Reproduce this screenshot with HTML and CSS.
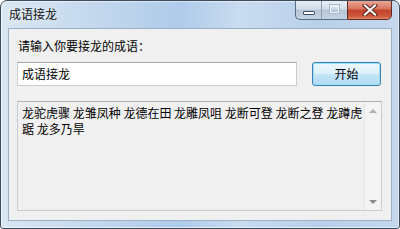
FILE: index.html
```html
<!DOCTYPE html>
<html lang="zh-CN">
<head>
<meta charset="utf-8">
<title>成语接龙</title>
<link rel="stylesheet" href="styles.css">
</head>
<body>
<div class="win">
  <div class="titlebar">
    <span class="title">成语接龙</span>
    <div class="caption">
      <div class="cbtn min"><span class="min-ico"></span></div>
      <div class="cbtn max"><span class="max-ico"></span></div>
      <div class="cbtn close">
        <svg width="16" height="12" viewBox="0 0 16 12">
          <path d="M3 1.5 L13 10.5 M13 1.5 L3 10.5" stroke="#5a2218" stroke-width="4.2" stroke-linecap="square" fill="none"/>
          <path d="M3 1.5 L13 10.5 M13 1.5 L3 10.5" stroke="#ffffff" stroke-width="2.2" stroke-linecap="square" fill="none"/>
        </svg>
      </div>
    </div>
  </div>
  <div class="client">
    <div class="label">请输入你要接龙的成语：</div>
    <div class="row">
      <div class="input">成语接龙</div>
      <div class="button">开始</div>
    </div>
    <div class="memo">
      <div class="memo-text">龙驼虎骤 龙雏凤种 龙德在田 龙雕凤咀 龙断可登 龙断之登 龙蹲虎踞 龙多乃旱</div>
      <div class="vscroll">
        <div class="arrow up"></div>
        <div class="arrow down"></div>
      </div>
    </div>
  </div>
</div>
</body>
</html>
```
FILE: styles.css
```css
html, body {
  margin: 0;
  padding: 0;
  background: #ffffff;
}
body {
  font-family: "Noto Sans CJK SC", "Noto Sans", sans-serif;
  font-size: 12px;
  color: #000;
}
.win {
  width: 400px;
  height: 229px;
  box-sizing: border-box;
  border: 1px solid #3c4a59;
  border-radius: 7px 7px 3px 3px;
  background: linear-gradient(90deg, #d9e6f3 0%, #c2d7ed 25%, #aecbea 45%, #c9dcf0 60%, #b8d0ea 80%, #c4d8ee 100%);
  box-shadow: inset 0 0 0 1px rgba(255,255,255,0.55);
  display: flex;
  flex-direction: column;
  overflow: hidden;
}
.titlebar {
  height: 27px;
  flex: none;
  display: flex;
  justify-content: space-between;
  align-items: flex-start;
  padding: 0 7px 0 8px;
}
.title {
  margin-top: 5px;
  line-height: 16px;
  color: #111;
  text-shadow: 0 0 6px rgba(255,255,255,0.9);
}
.caption {
  display: flex;
  margin-top: -1px;
}
.cbtn {
  height: 20px;
  box-sizing: border-box;
  border: 1px solid #5b6b7d;
  border-top-color: #6a7888;
  display: flex;
  align-items: center;
  justify-content: center;
}
.min {
  width: 26px;
  border-right: none;
  border-radius: 0 0 0 5px;
  background: linear-gradient(180deg, #e6edf5 0%, #d3dee9 45%, #b6c6d7 50%, #c4d3e2 100%);
}
.max {
  width: 26px;
  border-right: none;
  border-left: 1px solid #8c9aab;
  background: linear-gradient(180deg, #e6edf5 0%, #d3dee9 45%, #b6c6d7 50%, #c4d3e2 100%);
}
.close {
  width: 45px;
  border-color: #5e2a22;
  border-radius: 0 0 5px 0;
  background: linear-gradient(180deg, #e9a595 0%, #d8735c 45%, #c2412a 50%, #cd5a3e 85%, #e08a62 100%);
}
.min-ico {
  display: block;
  width: 10px;
  height: 2px;
  margin-top: 6px;
  background: #ffffff;
  border: 1px solid #3f4d5e;
  border-radius: 1px;
}
.max-ico {
  display: block;
  width: 7px;
  height: 5px;
  margin-top: -2px;
  border: 1px solid #eef3f8;
  border-top-width: 2px;
  box-shadow: 0 0 0 1px #a9b8c8;
}
.client {
  flex: 1;
  margin: 0 7px 7px 7px;
  border: 1px solid #9cb1c7;
  background: #f0f0f0;
  display: flex;
  flex-direction: column;
  padding: 9px 9px 9px 8px;
}
.label {
  line-height: 16px;
  padding-left: 1px;
}
.row {
  display: flex;
  margin-top: 8px;
  gap: 15px;
  height: 24px;
}
.input {
  width: 280px;
  box-sizing: border-box;
  background: #ffffff;
  border: 1px solid #c9ced6;
  border-top-color: #a3a8b0;
  padding-left: 4px;
  line-height: 22px;
}
.button {
  width: 69px;
  box-sizing: border-box;
  border: 1px solid #3c7fb1;
  border-radius: 3px;
  background: linear-gradient(180deg, #edf7fd 0%, #dcf0fb 48%, #c4e5f8 52%, #b1dbf4 100%);
  box-shadow: inset 0 0 0 1px #9ee1fd;
  text-align: center;
  line-height: 22px;
}
.memo {
  margin-top: 15px;
  height: 110px;
  box-sizing: border-box;
  border: 1px solid #c9ced6;
  border-top-color: #adb2b9;
  display: flex;
}
.memo-text {
  flex: 1;
  padding: 3px 0 0 4px;
  line-height: 16px;
}
.vscroll {
  width: 17px;
  flex: none;
  border-left: 1px solid #e6e6e6;
  background: #f4f4f4;
  display: flex;
  flex-direction: column;
  justify-content: space-between;
  align-items: center;
  padding: 7px 0 6px 0;
  box-sizing: border-box;
}
.arrow {
  width: 0;
  height: 0;
  border-left: 4px solid transparent;
  border-right: 4px solid transparent;
}
.arrow.up {
  border-bottom: 4px solid #b0b0b0;
}
.arrow.down {
  border-top: 4px solid #8a8a8a;
}
```
